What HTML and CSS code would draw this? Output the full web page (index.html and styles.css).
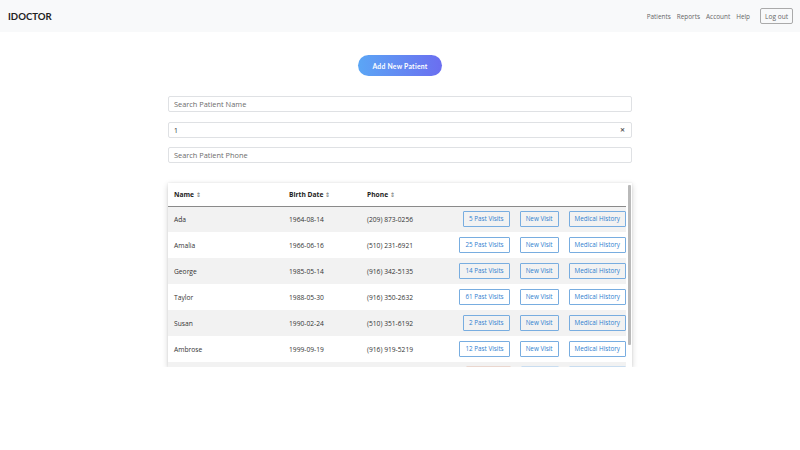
FILE: index.html
```html
<!DOCTYPE html>
<html>
<head>
<meta charset="utf-8">
<link rel="stylesheet" href="styles.css">
</head>
<body>
<nav class="navbar">
  <div class="brand">IDOCTOR</div>
  <div class="nav-right">
    <a class="nav-link">Patients</a>
    <a class="nav-link">Reports</a>
    <a class="nav-link">Account</a>
    <a class="nav-link">Help</a>
    <button class="logout">Log out</button>
  </div>
</nav>
<main class="main">
  <div class="add-wrap"><button class="add-btn">Add New Patient</button></div>
  <div class="search">
    <div class="field"><span class="ph">Search Patient Name</span></div>
    <div class="field"><span class="val">1</span><span class="clear">✕</span></div>
    <div class="field"><span class="ph">Search Patient Phone</span></div>
  </div>
  <div class="card">
    <div class="scroll">
      <table class="tbl">
        <thead>
          <tr><th class="c-name">Name <span class="sort">⇕</span></th><th class="c-date">Birth Date <span class="sort">⇕</span></th><th class="c-phone">Phone <span class="sort">⇕</span></th><th class="c-act"></th></tr>
        </thead>
        <tbody>
          <tr><td>Ada</td><td>1964-08-14</td><td>(209) 873-0256</td><td class="act"><span class="b">5 Past Visits</span><span class="b">New Visit</span><span class="b">Medical History</span></td></tr>
          <tr><td>Amalia</td><td>1966-06-16</td><td>(510) 231-6921</td><td class="act"><span class="b">25 Past Visits</span><span class="b">New Visit</span><span class="b">Medical History</span></td></tr>
          <tr><td>George</td><td>1985-05-14</td><td>(916) 342-5135</td><td class="act"><span class="b">14 Past Visits</span><span class="b">New Visit</span><span class="b">Medical History</span></td></tr>
          <tr><td>Taylor</td><td>1988-05-30</td><td>(916) 350-2632</td><td class="act"><span class="b">61 Past Visits</span><span class="b">New Visit</span><span class="b">Medical History</span></td></tr>
          <tr><td>Susan</td><td>1990-02-24</td><td>(510) 351-6192</td><td class="act"><span class="b">2 Past Visits</span><span class="b">New Visit</span><span class="b">Medical History</span></td></tr>
          <tr><td>Ambrose</td><td>1999-09-19</td><td>(916) 919-5219</td><td class="act"><span class="b">12 Past Visits</span><span class="b">New Visit</span><span class="b">Medical History</span></td></tr>
          <tr class="peek"><td></td><td></td><td></td><td class="act"><span class="b pw1 warm"></span><span class="b pw2"></span><span class="b pw3"></span></td></tr>
        </tbody>
      </table>
    </div>
    <div class="sbar"><div class="thumb"></div></div>
  </div>
</main>
</body>
</html>
```
FILE: styles.css
```css
* { box-sizing: border-box; }
html, body { margin: 0; padding: 0; background: #fff; }
body { font-family: "Open Sans", "Liberation Sans", sans-serif; color: #212529; }

.navbar {
  height: 32px;
  background: #f8f9fa;
  display: flex;
  align-items: center;
  justify-content: space-between;
  padding: 0 7px 0 8px;
}
.brand {
  font-family: "Lato", "Liberation Sans", sans-serif;
  font-weight: 700;
  font-size: 9.6px;
  color: #222;
}
.nav-right { display: flex; align-items: center; }
.nav-link {
  font-family: "Open Sans", sans-serif;
  font-size: 6.4px;
  color: #666;
  margin-right: 6px;
}
.logout {
  font-family: "Open Sans", sans-serif;
  font-size: 6.6px;
  color: #666;
  background: transparent;
  border: 1px solid #aaa;
  border-radius: 2px;
  height: 16px;
  width: 33px;
  padding: 0;
  margin-left: 4px;
}

.main { width: 464px; margin: 0 auto; padding-top: 23px; }
.add-wrap { display: flex; justify-content: center; }
.add-btn {
  width: 84px;
  height: 21px;
  border: none;
  border-radius: 11px;
  background: linear-gradient(90deg, #5ba6f5 0%, #6b6ef0 100%);
  color: #fff;
  font-family: "Lato", sans-serif;
  font-weight: 700;
  font-size: 6.8px;
  letter-spacing: 0.25px;
  padding: 0;
}
.search { margin-top: 20px; display: flex; flex-direction: column; gap: 10px; }
.search .field:nth-child(3) { margin-top: -1px; }
.field {
  height: 16px;
  border: 1px solid #dfe1e4;
  border-radius: 2px;
  display: flex;
  align-items: center;
  justify-content: space-between;
  padding: 0 6px 0 5px;
  font-size: 7.4px;
}
.ph { color: #6c6c6c; }
.val { color: #333; font-size: 6.8px; }
.clear { color: #555; font-size: 6px; font-weight: 700; }

.card {
  margin-top: 20px;
  height: 184px;
  background: #fff;
  box-shadow: 0 2px 6px rgba(0,0,0,0.18), 0 0 2px rgba(0,0,0,0.08);
  overflow: hidden;
  display: flex;
}
.scroll { flex: 1; height: 184px; overflow: hidden; }
.sbar { width: 6px; padding: 2px 1px 0 2px; background: #fff; }
.thumb { width: 3px; height: 160px; background: #b9b9b9; border-radius: 1px; }

.tbl { width: 100%; border-collapse: collapse; font-size: 6.7px; table-layout: fixed; }
.tbl th {
  height: 23px;
  text-align: left;
  font-weight: 700;
  color: #222;
  border-bottom: 1.5px solid #8a8a8a;
  padding: 0 6px;
}
.c-name { width: 115px; }
.c-date { width: 78px; }
.c-phone { width: 70px; }
.sort { font-weight: 400; color: #666; font-size: 6px; }
.tbl td { height: 26px; padding: 0 6px; color: #333; }
.tbl tbody tr:nth-child(odd) { background: #f2f2f2; }
.act { text-align: right; white-space: nowrap; padding-right: 0 !important; padding-left: 0 !important; }
.b {
  display: inline-block;
  height: 16px;
  line-height: 14px;
  padding: 0 5px;
  border: 1px solid #78ade0;
  border-radius: 1px;
  color: #2f80d0;
  font-size: 6.3px;
  margin-left: 10px;
  background: #fff;
  vertical-align: middle;
}
.b:first-child { margin-left: 0; }
.tbl tbody tr:nth-child(odd) .b { background: transparent; }
.peek td { vertical-align: top; padding-top: 4px; }
.peek .b { vertical-align: top; border-color: #c9ddf0; }
.peek .pw1 { width: 45px; }
.peek .pw2 { width: 38px; }
.peek .pw3 { width: 57px; }
.peek .warm { border-color: #ead7cf; }
```
